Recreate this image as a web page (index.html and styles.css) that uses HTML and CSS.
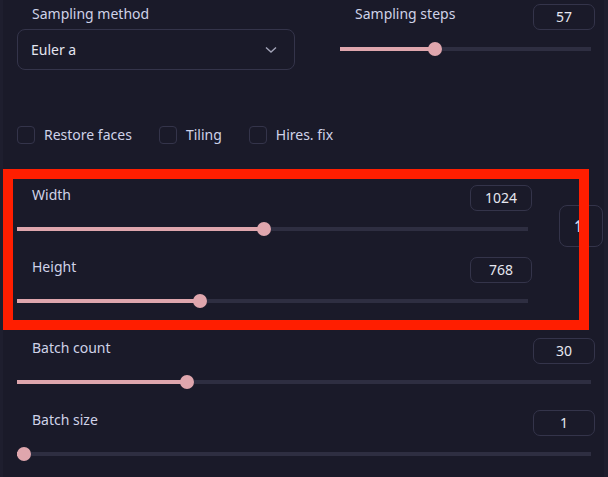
FILE: index.html
```html
<!DOCTYPE html>
<html>
<head>
    <meta charset="UTF-8">
    <title>txt2img settings</title>
    <link rel="stylesheet" href="styles.css">
</head>
<body>
<div class="panel">
    <!-- sampler + steps -->
    <div class="top-row">
        <div class="sampler">
            <div class="label">Sampling method</div>
            <div class="dropdown">
                <span>Euler a</span>
                <svg width="12" height="8" viewBox="0 0 12 8"><polyline points="1,1.5 6,6 11,1.5" fill="none" stroke="#a3a4b8" stroke-width="1.4"/></svg>
            </div>
        </div>
        <div class="field">
            <div class="field-head">
                <span class="label">Sampling steps</span>
                <span class="num">57</span>
            </div>
            <div class="track"><div class="fill" style="width:95px"></div><div class="thumb"></div></div>
        </div>
    </div>

    <!-- options -->
    <div class="checks">
        <label class="check"><span class="box"></span>Restore faces</label>
        <label class="check"><span class="box"></span>Tiling</label>
        <label class="check"><span class="box"></span>Hires. fix</label>
    </div>

    <!-- width / height -->
    <div class="dims">
        <div class="dims-fields">
            <div class="field">
                <div class="field-head">
                    <span class="label">Width</span>
                    <span class="num">1024</span>
                </div>
                <div class="track"><div class="fill" style="width:247px"></div><div class="thumb"></div></div>
            </div>
            <div class="field">
                <div class="field-head">
                    <span class="label">Height</span>
                    <span class="num">768</span>
                </div>
                <div class="track"><div class="fill" style="width:183px"></div><div class="thumb"></div></div>
            </div>
        </div>
        <button class="swap">⇅</button>
        <div class="highlight"></div>
    </div>

    <!-- batch -->
    <div class="field">
        <div class="field-head">
            <span class="label">Batch count</span>
            <span class="num">30</span>
        </div>
        <div class="track"><div class="fill" style="width:170px"></div><div class="thumb"></div></div>
    </div>
    <div class="field">
        <div class="field-head">
            <span class="label">Batch size</span>
            <span class="num">1</span>
        </div>
        <div class="track"><div class="fill" style="width:7px"></div><div class="thumb"></div></div>
    </div>
</div>
</body>
</html>
```

FILE: styles.css
```css
body {
    margin: 0;
    background: #1e1e2e;
    font-family: "Noto Sans", "Liberation Sans", sans-serif;
    font-size: 14px;
    color: #cfd2e8;
}

.panel {
    margin: 0 4px 0 3px;
    height: 477px;
    padding: 4px 9px 0 14px;
    background: #1a1a29;
    box-sizing: border-box;
}

.label {
    padding-left: 15px;
    line-height: 20px;
}

/* top row */
.top-row {
    display: grid;
    grid-template-columns: 278px 1fr;
    column-gap: 45px;
}

.dropdown {
    margin-top: 5px;
    height: 41px;
    box-sizing: border-box;
    border: 1px solid #34344a;
    border-radius: 8px;
    padding: 0 17px 0 13px;
    display: flex;
    align-items: center;
    justify-content: space-between;
    color: #e4e5f0;
}

/* sliders */
.field-head {
    display: flex;
    justify-content: space-between;
    align-items: flex-start;
}

.num {
    width: 62px;
    height: 26px;
    box-sizing: border-box;
    border: 1px solid #34344a;
    border-radius: 7px;
    text-align: center;
    line-height: 24px;
    color: #e6e7f0;
}

.track {
    margin: 16px 4px 0 0;
    height: 4px;
    background: #2e2e41;
    display: flex;
    align-items: center;
}

.top-row .track {
    margin-top: 17px;
}

.fill {
    height: 4px;
    background: #dfa6ad;
}

.thumb {
    width: 14px;
    height: 14px;
    margin-left: -7px;
    border-radius: 50%;
    background: #dfa6ad;
    flex: none;
}

/* checkboxes */
.checks {
    margin-top: 56px;
    display: flex;
    gap: 27px;
    height: 18px;
    line-height: 18px;
}

.check {
    display: flex;
    align-items: center;
    gap: 9px;
}

.check .box {
    width: 18px;
    height: 18px;
    box-sizing: border-box;
    border: 1px solid #34344a;
    border-radius: 4px;
}

/* width / height */
.dims {
    position: relative;
    margin: 41px -8px 0 0;
    display: grid;
    grid-template-columns: 515px 44px;
    column-gap: 27px;
}

.dims-fields .field + .field {
    margin-top: 26px;
}

.swap {
    margin-top: 20px;
    width: 44px;
    height: 42px;
    border: 1px solid #34344a;
    border-radius: 8px;
    background: #1a1a29;
    color: #cfd2e8;
    font-family: "DejaVu Sans", sans-serif;
    font-size: 16px;
    padding: 0;
}

.highlight {
    position: absolute;
    left: -14px;
    top: -16px;
    width: 586px;
    height: 161px;
    box-sizing: border-box;
    border: 10px solid #ff1e00;
}

.dims + .field {
    margin-top: 35px;
}

.field + .field {
    margin-top: 26px;
}
```
